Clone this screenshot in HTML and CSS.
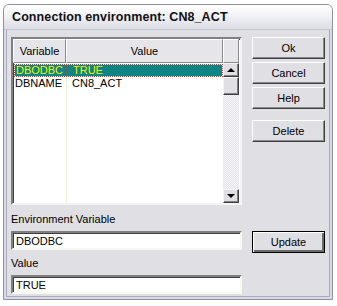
FILE: index.html
```html
<!DOCTYPE html>
<html lang="en">
<head>
    <meta charset="UTF-8">
    <meta name="viewport" content="width=device-width, initial-scale=1.0">
    <title>Connection environment</title>
    <link rel="stylesheet" href="styles.css">
</head>
<body>
    <div class="window">
        <div class="titlebar">Connection environment: CN8_ACT</div>
        <div class="dialog">
            <div class="listbox">
                <div class="list-head">
                    <div class="head-cell col-var">Variable</div>
                    <div class="head-cell col-val">Value</div>
                    <div class="head-cell col-pad"></div>
                </div>
                <div class="list-body">
                    <div class="rows">
                        <div class="row selected">
                            <span class="cell col-var">DBODBC</span>
                            <span class="cell col-val">TRUE</span>
                        </div>
                        <div class="row">
                            <span class="cell col-var">DBNAME</span>
                            <span class="cell col-val">CN8_ACT</span>
                        </div>
                    </div>
                    <div class="scrollbar">
                        <div class="sb-btn"><span class="arrow up"></span></div>
                        <div class="sb-thumb"></div>
                        <div class="sb-track"></div>
                        <div class="sb-btn"><span class="arrow down"></span></div>
                    </div>
                </div>
            </div>
            <div class="buttons">
                <button class="btn">Ok</button>
                <button class="btn">Cancel</button>
                <button class="btn">Help</button>
                <button class="btn spaced">Delete</button>
            </div>
            <label class="label first" for="envVar">Environment Variable</label>
            <input class="field" type="text" id="envVar" value="DBODBC">
            <button class="btn default">Update</button>
            <label class="label second" for="envValue">Value</label>
            <input class="field" type="text" id="envValue" value="TRUE">
        </div>
    </div>
</body>
</html>
```

FILE: styles.css
```css
*{
    box-sizing: border-box;
    margin: 0;
    padding: 0;
}
body{
    background: #ffffff;
    font-family: "Liberation Sans", Arial, sans-serif;
    font-size: 11px;
    color: #000;
}
.window{
    margin: 4px 0 0 3px;
    width: 330px;
    height: 296px;
    background: #e0dfe3;
    border: 1px solid #8f8fa9;
    border-radius: 6px 6px 0 0;
    box-shadow: inset 0 0 0 2px #d9d9e2, inset 0 0 0 3px #a9a9bf;
    display: flex;
    flex-direction: column;
    overflow: hidden;
}
.titlebar{
    height: 25px;
    padding: 5px 0 0 8px;
    font-weight: bold;
    font-size: 12.5px;
    letter-spacing: 0.1px;
    color: #111;
    background: linear-gradient(#ffffff, #f3f3f7 40%, #dcdce6);
    border-bottom: 1px solid #c4c4d2;
}
.dialog{
    display: grid;
    grid-template-columns: 231px 73px;
    grid-template-rows: 168px 26px 22px 22px 19px;
    column-gap: 10px;
    padding: 7px 0 0 7px;
}

/* list */
.listbox{
    background: #fff;
    border: 2px solid;
    border-color: #808080 #f4f4f4 #f4f4f4 #808080;
    box-shadow: inset 1px 1px 0 #404040;
    display: flex;
    flex-direction: column;
}
.list-head{
    display: flex;
    height: 24px;
}
.head-cell{
    background: #e6e6ea;
    border: 1px solid;
    border-color: #ffffff #8a8a8a #8a8a8a #ffffff;
    display: flex;
    align-items: center;
    justify-content: center;
}
.col-var{ width: 53px; }
.col-val{ width: 157px; }
.col-pad{ width: 16px; }
.list-body{
    flex: 1;
    display: flex;
}
.rows{
    width: 210px;
    padding-top: 1px;
    background: linear-gradient(90deg, transparent 53px, #eeeedd 53px, #eeeedd 54px, transparent 54px);
}
.row{
    display: flex;
    height: 13px;
    line-height: 11px;
}
.cell{
    padding: 1px 0 0 2px;
}
.cell.col-val{
    padding-left: 6px;
}
.row.selected{
    border: 1px dotted #b04a3a;
    color: #f2f200;
    margin-left: 1px;
}
.row.selected .cell{
    background: #0e8484;
    padding-top: 0;
}
.row.selected .col-var{
    width: 52px;
    border-right: 1px dotted #b04a3a;
    padding-left: 1px;
}
.row.selected .col-val{
    width: 155px;
}

/* scrollbar */
.scrollbar{
    width: 16px;
    display: flex;
    flex-direction: column;
}
.sb-btn, .sb-thumb{
    background: #e0dfe3;
    border: 1px solid;
    border-color: #f4f4f4 #404040 #404040 #f4f4f4;
    box-shadow: inset -1px -1px 0 #808080;
}
.sb-btn{
    height: 14px;
    display: flex;
    align-items: center;
    justify-content: center;
}
.sb-thumb{
    height: 18px;
}
.sb-track{
    flex: 1;
    background-color: #f1f1f3;
    background-image: repeating-conic-gradient(#e4e4e8 0 25%, #f6f6f8 0 50%);
    background-size: 2px 2px;
}
.arrow{
    width: 0;
    height: 0;
    border-left: 4px solid transparent;
    border-right: 4px solid transparent;
}
.arrow.up{ border-bottom: 4px solid #000; }
.arrow.down{ border-top: 4px solid #000; }

/* buttons */
.buttons{
    display: flex;
    flex-direction: column;
    gap: 3px;
}
.btn{
    width: 73px;
    height: 22px;
    font-family: "Liberation Sans", Arial, sans-serif;
    font-size: 11px;
    color: #000;
    background: #e0dfe3;
    border: 1px solid;
    border-color: #ffffff #404040 #404040 #ffffff;
    box-shadow: inset -1px -1px 0 #8a8a8a;
}
.btn.spaced{
    margin-top: 8px;
}
.btn.default{
    border: 1px solid #000;
    box-shadow: inset 1px 1px 0 #ffffff, inset -2px -2px 0 #6a6a6a;
}

/* fields */
.label{
    grid-column: 1 / 3;
}
.label.first{
    padding-top: 8px;
}
.label.second{
    padding-top: 4px;
}
.field{
    width: 231px;
    height: 19px;
    font-family: "Liberation Sans", Arial, sans-serif;
    font-size: 11px;
    padding-left: 3px;
    background: #fff;
    border: 2px solid;
    border-color: #808080 #f8f8f0 #f8f8f0 #808080;
    box-shadow: inset 1px 1px 0 #404040;
    outline: none;
}
```
